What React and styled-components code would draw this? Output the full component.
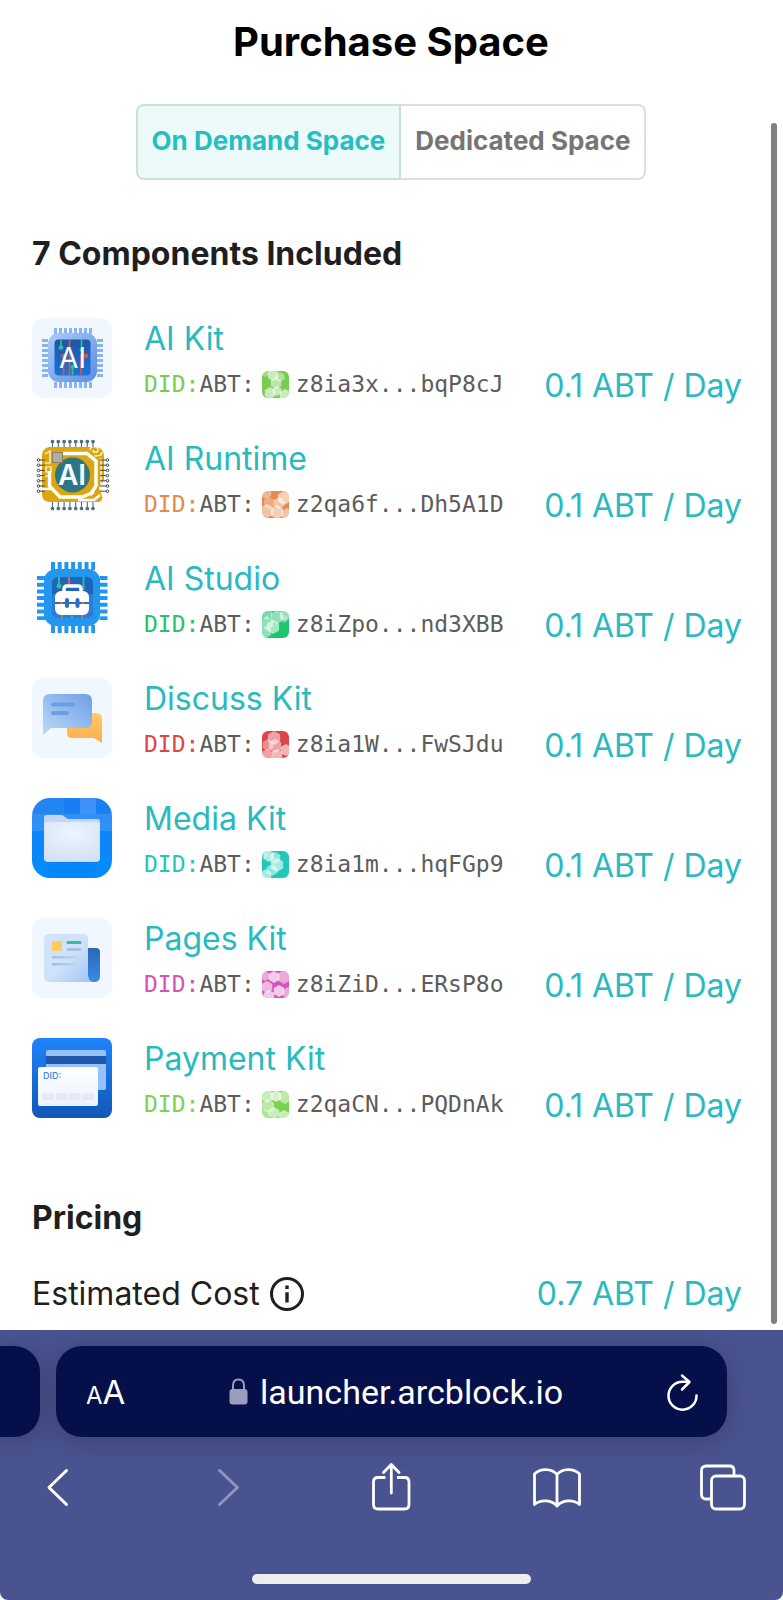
import React, { useState } from 'react'
import styled, { createGlobalStyle } from 'styled-components'

const GlobalStyle = createGlobalStyle`
    *{
        box-sizing: border-box;
    }
    body{
        margin: 0;
        background: #fff;
        color: #1f1f1f;
        font-family: Inter, 'Liberation Sans', sans-serif;
        font-size: 32px;
    }
    button{
        font: inherit;
        padding: 0;
        border: none;
        background: transparent;
        cursor: pointer;
    }
    svg{
        display: block;
        flex-shrink: 0;
    }
`;

const AiKitLogo = () => (
    <svg width="80" height="80" viewBox="0 0 80 80" aria-hidden="true">
        <defs>
            <linearGradient id="kitBody" x1="0" y1="0" x2="1" y2="1">
                <stop offset="0" stopColor="#a9cef9" />
                <stop offset="1" stopColor="#5a8ce4" />
            </linearGradient>
            <linearGradient id="kitCore" x1="0" y1="0" x2="0" y2="1">
                <stop offset="0" stopColor="#1f56a4" />
                <stop offset="1" stopColor="#1c74d8" />
            </linearGradient>
        </defs>
        <rect width="80" height="80" rx="12" fill="#f0f7ff" />
        <g fill="none" stroke="#8ab4f1" strokeWidth="6" strokeDasharray="3 2">
            <path d="M22 13H60M22 67H60M13 21V59M68 21V59" />
        </g>
        <rect x="16" y="15" width="49" height="49" rx="11" fill="url(#kitBody)" />
        <rect x="22.5" y="21.5" width="36" height="36" rx="4" fill="url(#kitCore)" />
        <g fill="none" strokeWidth="1.6">
            <path stroke="#e8503f" d="M37.500 21.500V57M31.500 57V38M49 57V37H54" />
            <path stroke="#2fbf9a" d="M29 21.500V29M49.500 21.500V32M40.500 57V49" />
        </g>
        <g fill="#2fbf9a">
            <circle cx="29" cy="29.500" r="2.300" />
            <circle cx="49.500" cy="32" r="2" />
            <circle cx="40.500" cy="49" r="2" />
        </g>
        <g fill="#e8503f">
            <circle cx="31" cy="38" r="2" />
            <circle cx="54" cy="38" r="2.300" />
        </g>
        <text x="40.500" y="49.500" textAnchor="middle" fontSize="28" fontWeight="400" fill="#fff">AI</text>
    </svg>
)

const RUNTIME_PINS_X = [20.5, 26.3, 32.1, 37.9, 43.7, 49.5, 55.3, 61]
const RUNTIME_PINS_Y = [22, 27.2, 32.4, 37.6, 42.8, 48, 53.2]

const AiRuntimeLogo = () => (
    <svg width="80" height="80" viewBox="0 0 80 80" aria-hidden="true">
        <rect width="80" height="80" fill="#fdfdfd" />
        <path fill="#dca60e" d="M18 9H62C68 9 72 12 72 18V42L67 50L70 58C71 62 69 64 65 64H18C13 64 10 61 10 56V18C10 13 13 9 18 9Z" />
        <g fill="none" stroke="#fff" strokeLinejoin="miter">
            <path strokeWidth="3.500" d="M31 15.500H55L64 23V48L58 57" />
            <path strokeWidth="3.500" d="M17.500 33V48L28 59H50L62 54" />
            <path strokeWidth="2.500" d="M10 51H19M46 62H62L68 57" />
            <path strokeWidth="1.200" d="M69 20V50M58 12C58 8 66 7 66 12C66 15 61 15 61 12M70 14C70 18 66 18 62 18" />
            <path strokeWidth="1.200" d="M13 16L18 13V20M18 20V25H13M14 29H19V34H14ZM12 38H18" />
        </g>
        <g stroke="#4b6f79" strokeWidth="1.100" fill="#4b6f79">
            {RUNTIME_PINS_X.map(x => (
                <React.Fragment key={x}>
                    <path d={`M${x} 4V9M${x} 64V70`} />
                    <circle cx={x} cy="3.500" r="1.300" />
                    <circle cx={x} cy="70.500" r="1.300" />
                </React.Fragment>
            ))}
        </g>
        <g stroke="#3f4a4d" strokeWidth="1" fill="#fff">
            {RUNTIME_PINS_Y.map(y => (
                <React.Fragment key={y}>
                    <path d={`M7 ${y}H13M68 ${y}H75`} />
                    <circle cx="6.500" cy={y} r="1.300" />
                    <circle cx="75.500" cy={y} r="1.300" />
                </React.Fragment>
            ))}
        </g>
        <circle cx="40.500" cy="37" r="17.500" fill="#2d7784" />
        <rect x="20.500" y="14.500" width="10" height="10" fill="#adadad" stroke="#8c7f52" />
        <text x="40" y="47" textAnchor="middle" fontSize="28" fontWeight="600" fill="#f4fbff">AI</text>
    </svg>
)

const AiStudioLogo = () => (
    <svg width="80" height="80" viewBox="0 0 80 80" aria-hidden="true">
        <g fill="none" stroke="#2397ef" strokeWidth="8" strokeDasharray="4 2.700">
            <path d="M19 8H63M19 71H63M9 18V62M71.500 18V62" />
        </g>
        <rect x="12" y="11" width="56" height="57" rx="12" fill="#2397ef" />
        <rect x="20" y="19" width="41" height="41" rx="6" fill="#1f64b8" />
        <path fill="#2b7dd6" d="M20 36H61V54A6 6 0 0 1 55 60H26A6 6 0 0 1 20 54Z" />
        <g fill="none" strokeWidth="1.800">
            <path stroke="#2fc2a0" d="M27 19V28M51.500 19V32M40 57V60" />
            <path stroke="#f0654b" d="M37 19V27M30 56V60M50 56V60" />
        </g>
        <circle cx="27" cy="28" r="2.500" fill="#2fc2a0" />
        <path fill="none" stroke="#fff" strokeWidth="3.500" d="M32 34V31Q32 28 35 28H46Q49 28 49 31V34" />
        <rect x="23" y="33" width="34" height="24" rx="6" fill="#fff" />
        <path stroke="#2b6fc0" strokeWidth="2.200" d="M23 45H57" />
        <path stroke="#2b6fc0" strokeWidth="4" strokeLinecap="round" d="M35 42V48M45.500 42V48" />
        <circle cx="29.500" cy="45" r="1.300" fill="#f0654b" />
        <circle cx="51" cy="45" r="1.300" fill="#f0654b" />
    </svg>
)

const DiscussLogo = () => (
    <svg width="80" height="80" viewBox="0 0 80 80" aria-hidden="true">
        <defs>
            <linearGradient id="talkBlue" x1="0" y1="1" x2="1" y2="0">
                <stop offset="0" stopColor="#bbdaf9" />
                <stop offset="1" stopColor="#6f9fe4" />
            </linearGradient>
            <linearGradient id="talkAmber" x1="0" y1="0" x2="0" y2="1">
                <stop offset="0" stopColor="#ffcb66" />
                <stop offset="1" stopColor="#fdae4c" />
            </linearGradient>
        </defs>
        <rect width="80" height="80" rx="12" fill="#f0f7ff" />
        <path fill="url(#talkAmber)" d="M42 35H64Q70 35 70 41V65L62 60H40Q35 60 35 55V42Q35 35 42 35Z" />
        <path fill="url(#talkBlue)" d="M18 16H53Q60 16 60 23V43Q60 50 53 50H19L11 57V23Q11 16 18 16Z" />
        <path stroke="#6a9fe0" strokeWidth="4" strokeLinecap="round" d="M21 26.500H41M21 35H35" />
    </svg>
)

const MediaLogo = () => (
    <svg width="80" height="80" viewBox="0 0 80 80" aria-hidden="true">
        <defs>
            <linearGradient id="mediaBg" x1="0" y1="0" x2="0" y2="1">
                <stop offset="0" stopColor="#1b7df2" />
                <stop offset="1" stopColor="#018dff" />
            </linearGradient>
            <radialGradient id="mediaFolder" cx="0.500" cy="0.300" r="0.800">
                <stop offset="0" stopColor="#edf5fe" />
                <stop offset="1" stopColor="#d2dff5" />
            </radialGradient>
            <clipPath id="mediaClip">
                <rect width="80" height="80" rx="18" />
            </clipPath>
        </defs>
        <g clipPath="url(#mediaClip)">
            <rect width="80" height="80" fill="url(#mediaBg)" />
            <path fill="#fff" fillOpacity="0.120" d="M0 16H80V33H0Z" />
            <path fill="#fff" fillOpacity="0.160" d="M48 0H64V16H48Z" />
            <path fill="#fff" fillOpacity="0.050" d="M0 0H32V16H0Z" />
            <path fill="#0060d8" fillOpacity="0.080" d="M16 64H64V80H16Z" />
        </g>
        <path fill="#c3d7f5" d="M14 17H29Q31 17 33 19L36 21H65Q68 21 68 24V60Q68 64 64 64H16Q12 64 12 60V19Q12 17 14 17Z" />
        <rect x="12" y="24" width="56" height="39" rx="3" fill="url(#mediaFolder)" />
    </svg>
)

const PagesLogo = () => (
    <svg width="80" height="80" viewBox="0 0 80 80" aria-hidden="true">
        <defs>
            <linearGradient id="pageSheet" x1="0" y1="0" x2="1" y2="1">
                <stop offset="0" stopColor="#d2e4fa" />
                <stop offset="0.500" stopColor="#cfe2fa" />
                <stop offset="1" stopColor="#9fc5f5" />
            </linearGradient>
            <linearGradient id="pageRoll" x1="0" y1="0" x2="0" y2="1">
                <stop offset="0" stopColor="#2a68b8" />
                <stop offset="1" stopColor="#3a8ae4" />
            </linearGradient>
            <linearGradient id="pageLine" x1="0" y1="0" x2="1" y2="0">
                <stop offset="0" stopColor="#9dbce8" />
                <stop offset="1" stopColor="#c3daf7" />
            </linearGradient>
        </defs>
        <rect width="80" height="80" rx="12" fill="#f0f7ff" />
        <path fill="url(#pageRoll)" d="M56 30H64Q68 30 68 34V58Q68 64 62 64Q56 64 56 58Z" />
        <path fill="url(#pageSheet)" d="M17 16H51Q56 16 56 21V57Q56 62 60 64H17Q12 64 12 59V21Q12 16 17 16Z" />
        <rect x="20" y="23" width="10" height="10" rx="1" fill="#ffcb5c" />
        <path stroke="#3cbd9a" strokeWidth="3" strokeLinecap="round" d="M36 24.500H48" />
        <path stroke="#9dbce8" strokeWidth="2.500" strokeLinecap="round" d="M36 31.500H48" />
        <rect x="20" y="38" width="28" height="2.400" rx="1" fill="url(#pageLine)" />
        <rect x="20" y="45" width="28" height="2.400" rx="1" fill="url(#pageLine)" />
    </svg>
)

const PaymentLogo = () => (
    <svg width="80" height="80" viewBox="0 0 80 80" aria-hidden="true">
        <defs>
            <linearGradient id="payBg" x1="0" y1="0" x2="0" y2="1">
                <stop offset="0" stopColor="#1f83fb" />
                <stop offset="1" stopColor="#1157b8" />
            </linearGradient>
            <linearGradient id="payCard" x1="0" y1="0" x2="0" y2="1">
                <stop offset="0" stopColor="#ffffff" />
                <stop offset="1" stopColor="#eaf1fd" />
            </linearGradient>
        </defs>
        <rect width="80" height="80" rx="8" fill="url(#payBg)" />
        <rect x="14" y="12" width="60" height="40" rx="2" fill="#95c2fb" />
        <rect x="14" y="18" width="60" height="8" fill="#1d58ab" />
        <rect x="6" y="29" width="60" height="39" rx="2" fill="url(#payCard)" />
        <text x="11" y="40.500" fontSize="9" fontWeight="500" fill="#3486f2">DID:</text>
        <g fill="#e6ebf5" stroke="#d6dcea" strokeWidth="0.700">
            <rect x="11" y="56" width="10" height="5" rx="1.500" />
            <rect x="24.500" y="56" width="10" height="5" rx="1.500" />
            <rect x="38" y="56" width="10" height="5" rx="1.500" />
            <rect x="51" y="56" width="10" height="5" rx="1.500" />
        </g>
    </svg>
)

const hexPath = (x, y, r) => {
    const h = r * 0.87
    return `M${x} ${y - r}l${h} ${r / 2}v${r}l${-h} ${r / 2}l${-h} ${-r / 2}v${-r}Z`
}

const DidAvatar = ({ id, color, cells }) => (
    <svg width="27" height="27" viewBox="0 0 27 27" aria-hidden="true">
        <clipPath id={`avatar-${id}`}>
            <rect width="27" height="27" rx="6" />
        </clipPath>
        <g clipPath={`url(#avatar-${id})`}>
            <rect width="27" height="27" fill={color} />
            {cells.map(([x, y, r, o], i) => (
                <path key={i} d={hexPath(x, y, r)} fill="#fff" fillOpacity={o} />
            ))}
        </g>
    </svg>
)

const InfoIcon = () => (
    <svg width="34" height="34" viewBox="0 0 34 34" aria-hidden="true">
        <circle cx="17" cy="17" r="15.500" fill="none" stroke="#1f1f1f" strokeWidth="3" />
        <path fill="#1f1f1f" d="M15.300 8.500H18.700V12H15.300ZM15.300 15.300H18.700V25.500H15.300Z" />
    </svg>
)

const LockIcon = () => (
    <svg width="19" height="27" viewBox="0 0 19 27" aria-hidden="true">
        <path fill="none" stroke="#9a9dbd" strokeWidth="2" d="M4 12V7.500Q4 1.500 9.500 1.500T15 7.500V12" />
        <rect x="0.500" y="11" width="18" height="15.500" rx="3" fill="#9a9dbd" />
    </svg>
)

const ReloadIcon = () => (
    <svg width="32" height="38" viewBox="0 0 32 38" fill="none" stroke="#fff" strokeWidth="2.500" strokeLinecap="round" strokeLinejoin="round" aria-hidden="true">
        <path d="M21 8.700H15.500A14 14 0 1 0 29.500 22.500" />
        <path d="M15 2.500L22.500 9L15 16.500" />
    </svg>
)

const BackIcon = () => (
    <svg width="48" height="48" viewBox="0 0 48 48" fill="none" stroke="#fff" strokeWidth="3" strokeLinecap="round" strokeLinejoin="round" aria-hidden="true">
        <path d="M32.500 7.500L15 24.500L32.500 41.500" />
    </svg>
)

const ForwardIcon = () => (
    <svg width="48" height="48" viewBox="0 0 48 48" fill="none" stroke="#8e96bd" strokeWidth="3" strokeLinecap="round" strokeLinejoin="round" aria-hidden="true">
        <path d="M19.500 7.500L37.500 24.500L19.500 41.500" />
    </svg>
)

const ShareIcon = () => (
    <svg width="48" height="48" viewBox="0 0 48 48" fill="none" stroke="#fff" strokeWidth="2.800" strokeLinecap="round" strokeLinejoin="round" aria-hidden="true">
        <path strokeLinecap="butt" d="M18.500 14.500H11Q6.500 14.500 6.500 19V41.500Q6.500 46 11 46H37.500Q42 46 42 41.500V19Q42 14.500 37.500 14.500H30" />
        <path d="M24.300 30V2M16.500 9.500L24.300 1.500L32 9.500" />
    </svg>
)

const BookIcon = () => (
    <svg width="48" height="48" viewBox="0 0 48 48" fill="none" stroke="#fff" strokeWidth="2.800" strokeLinecap="round" strokeLinejoin="round" aria-hidden="true">
        <path d="M24 11.500V43C19 37 8 36 1.500 41.500V11C7 5 19 5 24 11.500C29 5 41 5 46.500 11V41.500C40 36 29 37 24 43" />
    </svg>
)

const TabsIcon = () => (
    <svg width="48" height="48" viewBox="0 0 48 48" fill="none" stroke="#fff" strokeWidth="2.800" strokeLinejoin="round" aria-hidden="true">
        <path d="M12 36H7Q2.500 36 2.500 31.500V7.500Q2.500 3 7 3H30.500Q35 3 35 7.500V12.500" />
        <rect x="12.500" y="13" width="33" height="33" rx="4.500" />
    </svg>
)

const components = [
    {
        name: 'AI Kit', did: 'z8ia3x...bqP8cJ', color: '#78cc52', logo: <AiKitLogo />,
        cells: [[11, 4, 6, 0.6], [18, 6, 5, 0.4], [14, 12, 6, 0.5], [8, 22, 6, 0.6], [15, 20, 5, 0.6], [23, 24, 6, 0.6], [3, 1, 5, 0.3]],
    },
    {
        name: 'AI Runtime', did: 'z2qa6f...Dh5A1D', color: '#e5894d', logo: <AiRuntimeLogo />,
        cells: [[22, 7, 7, 0.6], [17, 12, 6, 0.5], [7, 12, 6, 0.3], [5, 20, 7, 0.5], [15, 21, 7, 0.6], [25, 23, 6, 0.5], [4, 2, 6, 0.4]],
    },
    {
        name: 'AI Studio', did: 'z8iZpo...nd3XBB', color: '#1fc46f', logo: <AiStudioLogo />,
        cells: [[15, 6, 7, 0.5], [23, 4, 6, 0.5], [5, 3, 6, 0.4], [5, 12, 7, 0.5], [11, 16, 7, 0.6], [4, 21, 6, 0.5], [22, 8, 4, 0.3]],
    },
    {
        name: 'Discuss Kit', did: 'z8ia1W...FwSJdu', color: '#df4548', logo: <DiscussLogo />,
        cells: [[12, 7, 7, 0.5], [6, 14, 6, 0.4], [13, 15, 7, 0.5], [5, 24, 6, 0.5], [15, 24, 6, 0.6], [24, 19, 6, 0.6]],
    },
    {
        name: 'Media Kit', did: 'z8ia1m...hqFGp9', color: '#1ec9b7', logo: <MediaLogo />,
        cells: [[7, 5, 6, 0.6], [13, 7, 6, 0.5], [15, 14, 7, 0.6], [10, 19, 6, 0.5], [4, 24, 6, 0.6], [2, 3, 5, 0.3]],
    },
    {
        name: 'Pages Kit', did: 'z8iZiD...ERsP8o', color: '#d652b9', logo: <PagesLogo />,
        cells: [[12, 6, 6, 0.7], [22, 6, 7, 0.5], [3, 5, 5, 0.5], [5, 16, 6, 0.6], [7, 25, 6, 0.7], [17, 20, 6, 0.7], [26, 22, 6, 0.5]],
    },
    {
        name: 'Payment Kit', did: 'z2qaCN...PQDnAk', color: '#76d452', logo: <PaymentLogo />,
        cells: [[5, 5, 7, 0.6], [14, 5, 6, 0.7], [23, 6, 7, 0.5], [6, 15, 7, 0.5], [12, 22, 6, 0.6], [22, 25, 6, 0.6], [3, 24, 6, 0.4]],
    },
]

const plans = ['On Demand Space', 'Dedicated Space']

function ComponentRow({ item, index }) {
    return (
        <Row>
            {item.logo}
            <Info>
                <Name href="#">{item.name}</Name>
                <Did>
                    <span><DidMethod $color={item.color}>DID:</DidMethod>ABT:</span>
                    <DidAvatar id={index} color={item.color} cells={item.cells} />
                    <span>{item.did}</span>
                </Did>
            </Info>
            <RowPrice>0.1 ABT / Day</RowPrice>
        </Row>
    )
}

function App() {
    const [plan, setPlan] = useState(plans[0])

    return (
        <Screen>
            <GlobalStyle />
            <Content>
                <Title>Purchase Space</Title>
                <PlanSwitch role="group" aria-label="Space type">
                    {plans.map(p => (
                        <PlanButton
                            key={p}
                            type="button"
                            $active={p === plan}
                            aria-pressed={p === plan}
                            onClick={() => setPlan(p)}
                        >
                            {p}
                        </PlanButton>
                    ))}
                </PlanSwitch>
                <Heading $top="50px">7 Components Included</Heading>
                <List>
                    {components.map((item, i) => (
                        <ComponentRow key={item.name} item={item} index={i} />
                    ))}
                </List>
                <Heading $top="66px">Pricing</Heading>
                <CostRow>
                    <CostLabel>
                        Estimated Cost
                        <button type="button" aria-label="About the estimated cost"><InfoIcon /></button>
                    </CostLabel>
                    <Price>0.7 ABT / Day</Price>
                </CostRow>
                <ScrollThumb />
            </Content>
            <BrowserBar>
                <AddressRow>
                    <PreviousTab type="button" aria-label="Previous tab" />
                    <Address>
                        <TextSize type="button" aria-label="Text size">
                            <small>A</small>A
                        </TextSize>
                        <Url type="button">
                            <LockIcon />
                            launcher.arcblock.io
                        </Url>
                        <button type="button" aria-label="Reload"><ReloadIcon /></button>
                    </Address>
                </AddressRow>
                <Toolbar>
                    <button type="button" aria-label="Back"><BackIcon /></button>
                    <button type="button" aria-label="Forward" disabled><ForwardIcon /></button>
                    <button type="button" aria-label="Share"><ShareIcon /></button>
                    <button type="button" aria-label="Bookmarks"><BookIcon /></button>
                    <button type="button" aria-label="Tabs"><TabsIcon /></button>
                </Toolbar>
                <HomeIndicator />
            </BrowserBar>
        </Screen>
    )
}

const Screen = styled.div`
    min-height: 100vh;
    display: flex;
    flex-direction: column;
`;

const Content = styled.main`
    position: relative;
    flex: 1;
    display: flex;
    flex-direction: column;
    padding: 16px 41px 12px 32px;
`;

const Title = styled.h1`
    margin: 0;
    padding-left: 8px;
    font-size: 40px;
    line-height: 52px;
    font-weight: 700;
    color: #000;
    text-align: center;
`;

const PlanSwitch = styled.div`
    display: flex;
    align-self: center;
    height: 76px;
    margin-top: 36px;
    margin-left: 8px;
`;

const PlanButton = styled.button`
    padding: 0 14px 4px;
    border: 2px solid ${props => props.$active ? '#cbdfde' : '#dedede'};
    background: ${props => props.$active ? '#edfafa' : '#fff'};
    color: ${props => props.$active ? '#25bfc1' : '#757575'};
    font-size: 26px;
    font-weight: 700;
    white-space: nowrap;
    &:first-child{
        border-radius: 8px 0 0 8px;
    }
    &:last-child{
        border-left: none;
        border-radius: 0 8px 8px 0;
    }
`;

const Heading = styled.h2`
    margin: ${props => props.$top} 0 0;
    font-size: 32px;
    line-height: 48px;
    font-weight: 700;
`;

const List = styled.ul`
    list-style: none;
    margin: 40px 0 0;
    padding: 0;
    display: flex;
    flex-direction: column;
    gap: 30px;
`;

const Row = styled.li`
    display: flex;
    align-items: flex-start;
    gap: 32px;
`;

const Info = styled.div`
    flex: 1;
    min-width: 0;
    display: flex;
    flex-direction: column;
    align-items: flex-start;
`;

const Name = styled.a`
    line-height: 42px;
    color: #29bac0;
    text-decoration: none;
`;

const Did = styled.div`
    display: flex;
    align-items: center;
    gap: 7px;
    height: 48px;
    font-family: 'DejaVu Sans Mono', 'Liberation Mono', monospace;
    font-size: 23px;
    color: #5c5c5c;
    white-space: nowrap;
`;

const DidMethod = styled.span`
    color: ${props => props.$color};
`;

const Price = styled.span`
    line-height: 48px;
    color: #29bac0;
    white-space: nowrap;
`;

const RowPrice = styled(Price)`
    align-self: flex-end;
    line-height: 44px;
`;

const CostRow = styled.div`
    display: flex;
    align-items: center;
    justify-content: space-between;
    margin-top: 28px;
`;

const CostLabel = styled.div`
    display: flex;
    align-items: center;
    gap: 10px;
    line-height: 48px;
`;

const ScrollThumb = styled.div`
    position: absolute;
    top: 123px;
    right: 6px;
    bottom: 6px;
    width: 6px;
    border-radius: 3px;
    background: #808080;
`;

const BrowserBar = styled.footer`
    display: flex;
    flex-direction: column;
    padding: 16px 0;
    background: #49538f;
    border-radius: 0 0 8px 8px;
`;

const AddressRow = styled.div`
    display: flex;
    gap: 16px;
    height: 91px;
    padding-right: 56px;
`;

const PreviousTab = styled.button`
    width: 40px;
    background: #05104a;
    border-radius: 0 26px 26px 0;
    box-shadow: 0 4px 24px rgba(40, 40, 70, 0.4);
`;

const Address = styled.div`
    flex: 1;
    display: flex;
    align-items: center;
    justify-content: space-between;
    padding: 0 28px 0 30px;
    background: #05104a;
    border-radius: 26px;
    box-shadow: 0 4px 24px rgba(40, 40, 70, 0.4);
`;

const TextSize = styled.button`
    padding-top: 4px;
    color: #fff;
    font-size: 33px;
    line-height: 40px;
    small{
        font-size: 24px;
    }
`;

const Url = styled.button`
    display: flex;
    align-items: center;
    gap: 12px;
    color: #fff;
    font-family: Roboto, 'Liberation Sans', sans-serif;
    font-size: 34px;
    line-height: 40px;
`;

const Toolbar = styled.nav`
    display: flex;
    justify-content: space-between;
    margin-top: 26px;
    padding: 0 36px 0 34px;
`;

const HomeIndicator = styled.div`
    align-self: center;
    width: 279px;
    height: 10px;
    margin-top: 63px;
    border-radius: 5px;
    background: #ededed;
`;

export default App
